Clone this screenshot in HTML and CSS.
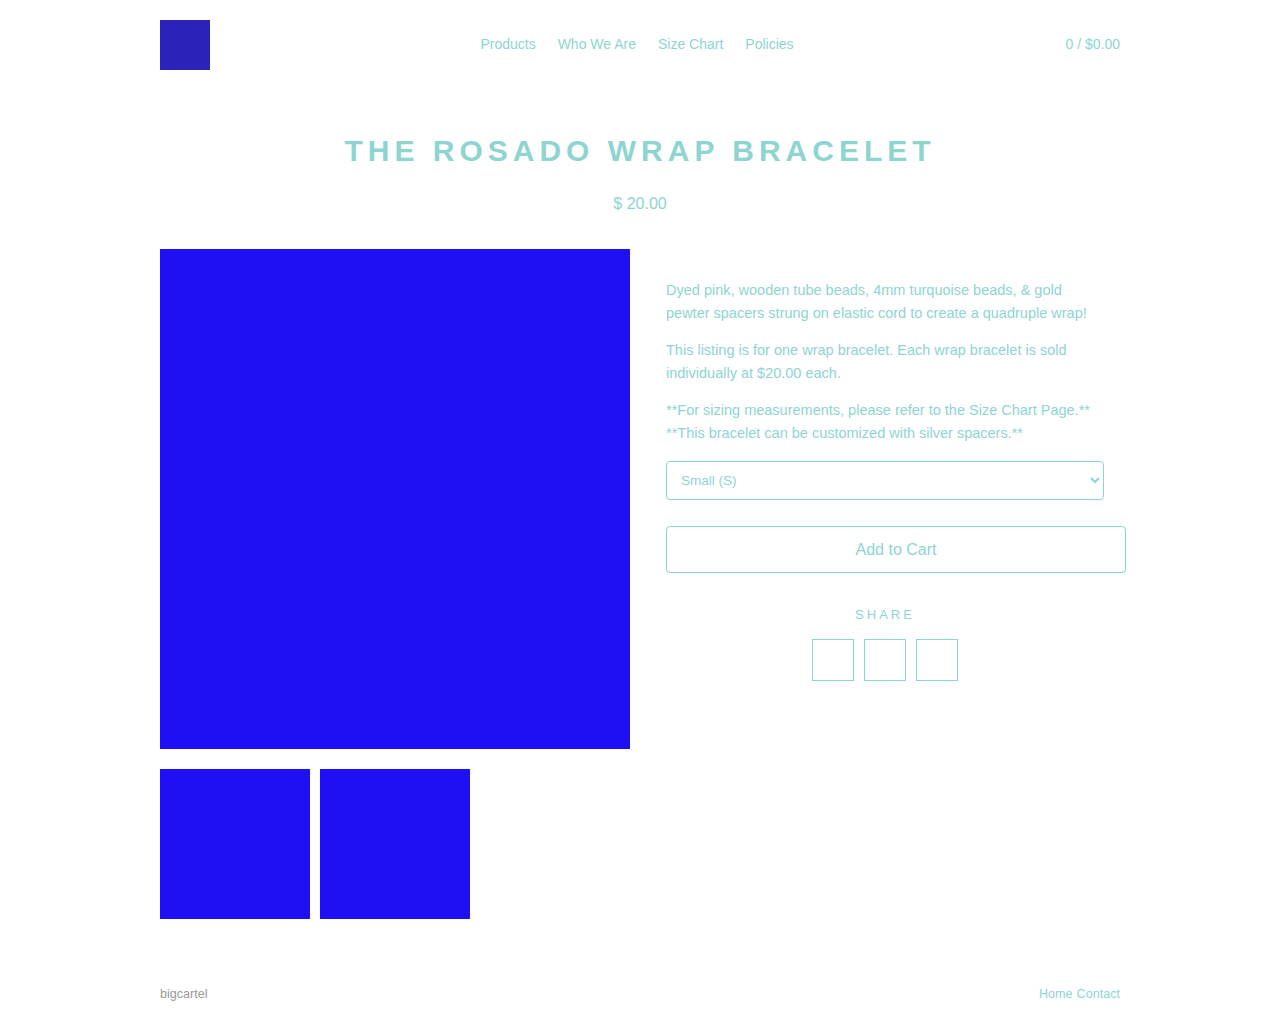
FILE: index.html
```html
<!DOCTYPE html>
<html lang="en">
<head>
    <meta charset="UTF-8">
    <meta name="viewport" content="width=device-width, initial-scale=1.0">
    <title>The Rosado Wrap Bracelet</title>
    <link rel="stylesheet" href="styles.css">
</head>
<body>
    <div class="wrapper">
        <header class="header">
            <a href="#" class="logo"></a>
            <nav class="nav">
                <a href="#">Products</a>
                <a href="#">Who We Are</a>
                <a href="#">Size Chart</a>
                <a href="#">Policies</a>
            </nav>
            <a href="#" class="cart">0 / $0.00</a>
        </header>

        <div class="product-head">
            <h1>The Rosado Wrap Bracelet</h1>
            <p class="price">$ 20.00</p>
        </div>

        <div class="product">
            <div class="gallery">
                <div class="main-image"></div>
                <div class="thumbs">
                    <div class="thumb"></div>
                    <div class="thumb"></div>
                </div>
            </div>

            <div class="details">
                <p>Dyed pink, wooden tube beads, 4mm turquoise beads, &amp; gold pewter spacers strung on elastic cord to create a quadruple wrap!</p>
                <p>This listing is for one wrap bracelet. Each wrap bracelet is sold individually at $20.00 each.</p>
                <p>**For sizing measurements, please refer to the Size Chart Page.**<br>**This bracelet can be customized with silver spacers.**</p>

                <select class="option-select">
                    <option>Small (S)</option>
                    <option>Medium (M)</option>
                    <option>Large (L)</option>
                </select>

                <button class="add-cart">Add to Cart</button>

                <div class="share">
                    <h4>Share</h4>
                    <div class="share-links">
                        <a href="#"></a>
                        <a href="#"></a>
                        <a href="#"></a>
                    </div>
                </div>
            </div>
        </div>

        <footer class="footer">
            <a href="#" class="badge">bigcartel</a>
            <div class="footer-links">
                <a href="#">Home</a>
                <a href="#">Contact</a>
            </div>
        </footer>
    </div>
</body>
</html>
```

FILE: styles.css
```css
body {
    font-family: "Liberation Sans", Arial, sans-serif;
    background-color: #fff;
    color: #8ed5d1;
    margin: 0;
    padding: 0;
}

a {
    color: #8ed5d1;
    text-decoration: none;
}

.wrapper {
    width: 960px;
    margin: 0 auto;
}

.header {
    display: grid;
    grid-template-columns: 1fr auto 1fr;
    align-items: center;
    padding-top: 20px;
    height: 50px;
}

.logo {
    display: block;
    width: 50px;
    height: 50px;
    background-color: #2a22b9;
}

.nav {
    display: flex;
    gap: 22px;
    font-size: 14px;
    line-height: 16px;
    margin-right: 6px;
    padding-bottom: 2px;
}

.cart {
    font-size: 14px;
    line-height: 16px;
    padding-bottom: 2px;
    justify-self: end;
}

.product-head {
    text-align: center;
    padding-top: 64px;
}

.product-head h1 {
    font-size: 30px;
    font-weight: bold;
    text-transform: uppercase;
    letter-spacing: 5px;
    margin: 0;
    line-height: 34px;
}

.price {
    font-size: 16px;
    margin: 26px 0 0;
    line-height: 20px;
}

.product {
    display: flex;
    gap: 36px;
    margin-top: 35px;
}

.gallery {
    width: 470px;
}

.main-image {
    width: 470px;
    height: 500px;
    background-color: #1e0ff5;
}

.thumbs {
    display: flex;
    gap: 10px;
    margin-top: 20px;
}

.thumb {
    width: 150px;
    height: 150px;
    background-color: #1e0ff5;
}

.details {
    width: 460px;
    padding-top: 30px;
}

.details p {
    font-size: 14.5px;
    line-height: 23px;
    margin: 0 0 14px;
    width: 438px;
}

.option-select {
    display: block;
    width: 438px;
    height: 39px;
    margin-top: 16px;
    padding: 0 10px;
    font-family: "Liberation Sans", Arial, sans-serif;
    font-size: 13.5px;
    color: #8ed5d1;
    background-color: #fff;
    border: 1px solid #8ed5d1;
    border-radius: 4px;
}

.add-cart {
    display: block;
    width: 460px;
    height: 47px;
    margin-top: 26px;
    font-family: "Liberation Sans", Arial, sans-serif;
    font-size: 16px;
    color: #8ed5d1;
    background-color: #fff;
    border: 1px solid #8ed5d1;
    border-radius: 4px;
    cursor: pointer;
}

.share {
    width: 438px;
    text-align: center;
    margin-top: 34px;
}

.share h4 {
    font-size: 13px;
    font-weight: normal;
    text-transform: uppercase;
    letter-spacing: 3px;
    margin: 0;
    line-height: 16px;
}

.share-links {
    display: flex;
    justify-content: center;
    gap: 10px;
    margin-top: 16px;
}

.share-links a {
    display: block;
    width: 40px;
    height: 40px;
    border: 1px solid #8ed5d1;
}

.footer {
    display: flex;
    justify-content: space-between;
    align-items: center;
    font-size: 12.6px;
    margin-top: 68px;
    padding-bottom: 22px;
}

.badge {
    color: #999;
}

.footer-links {
    display: flex;
    gap: 4px;
}
```
